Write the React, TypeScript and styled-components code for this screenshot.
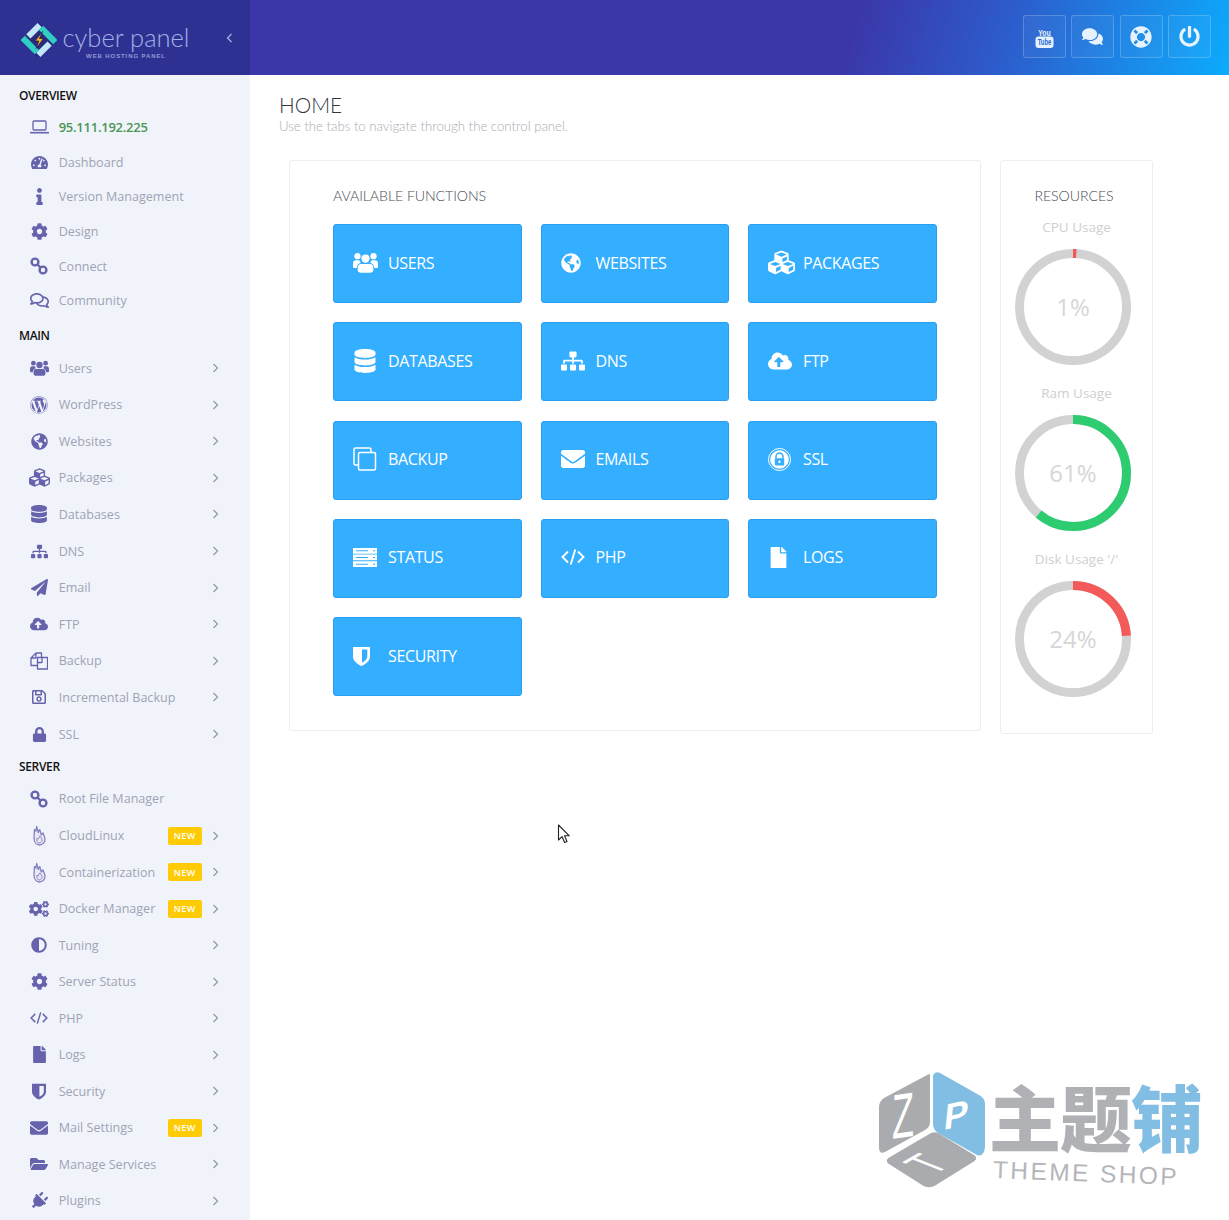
import React from "react";
import styled, { createGlobalStyle } from "styled-components";
import {
  FaAdjust, FaCloudUploadAlt, FaCog, FaCogs, FaComments, FaCubes, FaDatabase,
  FaEnvelope, FaFile, FaFolderOpen, FaGlobeAmericas, FaInfo, FaLifeRing, FaLock, FaPaperPlane, FaPlug,
  FaPowerOff, FaRegComments, FaRegSave, FaSitemap, FaTachometerAlt, FaWordpress,
} from "react-icons/fa";

const Global = createGlobalStyle`
  html, body { margin: 0; padding: 0; background: #fff; }
  body { font-family: "Open Sans", "Liberation Sans", sans-serif; }
  * { box-sizing: border-box; }
`;

const Shell = styled.div`
  position: relative;
  width: 1229px;
  height: 1220px;
  overflow: hidden;
  display: grid;
  grid-template-columns: 250px 1fr;
  grid-template-rows: 75px 1fr;
`;

const TopBar = styled.header`
  grid-column: 1 / 3;
  display: flex;
  align-items: center;
  background: linear-gradient(106deg, #3b37a9 0%, #3b37a9 69%, #2d5bcb 81%, #0cabfd 100%);
`;

const Brand = styled.div`
  width: 250px;
  height: 75px;
  display: flex;
  align-items: center;
  padding-left: 21px;
  background: #2f3192;
  color: #b6c3ee;
`;

const LogoSlot = styled.span`
  display: flex;
  margin-top: 4px;
`;

const BrandText = styled.div`
  margin-left: 6px;
  margin-top: 9px;
  display: flex;
  flex-direction: column;
  align-items: center;
  width: 126px;
`;

const BrandName = styled.span`
  font-family: "Lato", sans-serif;
  font-weight: 300;
  font-size: 25.5px;
  line-height: 27px;
  white-space: nowrap;
  color: #a3b2e6;
`;

const BrandTag = styled.span`
  margin-top: 1px;
  font-family: "Liberation Sans", sans-serif;
  font-weight: 700;
  font-size: 6px;
  line-height: 8px;
  letter-spacing: 0.9px;
  color: #8f9bd8;
`;

const Collapse = styled.span`
  margin-left: 37px;
  display: flex;
  color: #a9b3e6;
`;

const TopActions = styled.div`
  margin-left: auto;
  margin-right: 18px;
  margin-top: -2px;
  display: flex;
  gap: 5.33px;
`;

const TopButton = styled.div`
  width: 43px;
  height: 43px;
  display: flex;
  align-items: center;
  justify-content: center;
  border: 1px solid rgba(255, 255, 255, 0.2);
  border-radius: 3px;
  background: rgba(255, 255, 255, 0.04);
  color: #e6f3ff;
  font-size: 21px;
`;

const Sidebar = styled.aside`
  background: #f1f3fb;
  overflow: hidden;
`;

const GroupLabel = styled.div<{ $h: number; $pt: number }>`
  height: ${(p) => p.$h}px;
  padding: ${(p) => p.$pt}px 0 0 19px;
  display: flex;
  align-items: center;
  font-size: 12px;
  font-weight: 600;
  letter-spacing: -0.35px;
  color: #111;
`;

const Row = styled.div<{ $h: number }>`
  height: ${(p) => p.$h}px;
  display: flex;
  align-items: center;
  padding-left: 27px;
  padding-right: 31px;
`;

const RowIcon = styled.span`
  width: 24px;
  flex: none;
  display: flex;
  justify-content: center;
  color: #6662ac;
  font-size: 17px;
`;

const RowText = styled.span<{ $ip?: boolean }>`
  margin-left: 7.7px;
  font-size: ${(p) => (p.$ip ? 13 : 12.55)}px;
  white-space: nowrap;
  color: ${(p) => (p.$ip ? "#4b9654" : "#9ea3b3")};
  font-weight: ${(p) => (p.$ip ? 600 : 400)};
  letter-spacing: ${(p) => (p.$ip ? "-0.25px" : "0")};
`;

const NewBadge = styled.span`
  margin-left: auto;
  margin-right: 10px;
  width: 34.5px;
  height: 18px;
  display: flex;
  align-items: center;
  justify-content: center;
  background: #ffcb05;
  border-radius: 2px;
  color: #fff;
  font-size: 9px;
  font-weight: 600;
  letter-spacing: 0.4px;
`;

const Chevron = styled.span<{ $auto: boolean }>`
  margin-left: ${(p) => (p.$auto ? "auto" : "0")};
  display: flex;
  color: #9296a8;
`;

const Main = styled.main`
  padding: 18px 0 0 29px;
  background: #fff;
`;

const PageTitle = styled.h1`
  margin: 0;
  font-family: "Lato", sans-serif;
  font-weight: 300;
  font-size: 20.8px;
  line-height: 23px;
  color: #33353f;
`;

const PageSub = styled.p`
  margin: 2px 0 0;
  font-family: "Lato", sans-serif;
  font-weight: 300;
  font-size: 13.2px;
  line-height: 16px;
  white-space: nowrap;
  color: #a9acb4;
`;

const Cards = styled.div`
  margin: 26px 0 0 10px;
  display: flex;
  align-items: flex-start;
  gap: 19px;
`;

const Card = styled.section`
  width: 692px;
  padding: 24px 43px 34px;
  border: 1px solid #eeeeee;
  border-radius: 3px;
`;

const CardTitle = styled.h2<{ $center?: boolean }>`
  margin: 0 0 18px;
  padding-right: ${(p) => (p.$center ? "5px" : "0")};
  font-family: "Lato", sans-serif;
  font-weight: 300;
  font-size: 14.2px;
  line-height: 21px;
  letter-spacing: -0.1px;
  white-space: nowrap;
  color: #4a4c57;
  text-align: ${(p) => (p.$center ? "center" : "left")};
`;

const TileGrid = styled.div`
  display: grid;
  grid-template-columns: repeat(3, 188.5px);
  grid-auto-rows: 79px;
  column-gap: 19px;
  row-gap: 19.3px;
`;

const Tile = styled.a`
  display: flex;
  align-items: center;
  padding-left: 19px;
  padding-bottom: 2px;
  background: #34aeff;
  border: 1px solid #2a9ef2;
  border-radius: 3px;
  color: #fff;
  font-size: 16px;
  letter-spacing: -0.35px;
`;

const TileIcon = styled.span`
  width: 35px;
  flex: none;
  display: flex;
  font-size: 24px;
`;

const Panel = styled.section`
  width: 153px;
  padding: 24px 0 36px;
  border: 1px solid #eeeeee;
  border-radius: 3px;
`;

const Gauge = styled.div`
  margin-top: 18px;
  &:first-of-type { margin-top: -7px; }
`;

const GaugeLabel = styled.div`
  height: 20px;
  line-height: 20px;
  margin-bottom: 12px;
  text-align: center;
  font-size: 13.5px;
  color: #cfcfcf;
`;

const Ring = styled.div`
  margin-left: 14px;
  width: 116px;
  height: 116px;
  display: grid;
  place-items: center;
  & > * { grid-area: 1 / 1; }
`;

const RingValue = styled.span`
  padding-bottom: 2px;
  font-size: 24px;
  color: #d6d6d6;
`;

const Watermark = styled.div`
  position: absolute;
  left: 878px;
  top: 1072px;
  width: 330px;
  height: 120px;
  display: flex;
`;

const MarkText = styled.div`
  margin-left: 3px;
  padding-top: 4px;
`;

const MarkCjk = styled.div`
  font-family: "Noto Sans CJK SC", sans-serif;
  font-weight: 900;
  font-size: 72px;
  line-height: 78px;
  white-space: nowrap;
  color: #afb1b5;
  letter-spacing: -1px;
`;

const MarkAccent = styled.span`
  color: #82bde3;
`;

const MarkLatin = styled.div`
  margin: 6px 0 0 4px;
  font-family: "Liberation Sans", sans-serif;
  font-size: 24.5px;
  line-height: 28px;
  letter-spacing: 2.4px;
  white-space: nowrap;
  color: #b4b6ba;
  transform: rotate(2.2deg);
`;

const Pointer = styled.svg`
  position: absolute;
  left: 557px;
  top: 824px;
`;

const RingSvg = styled.svg`
  display: block;
`;

const TiltedPlug = styled(FaPlug)`
  transform: rotate(45deg);
`;

/* hand-drawn icons */
const Chain = () => (
  <svg width="18" height="18" viewBox="0 0 18 18" fill="none" stroke="currentColor" strokeWidth="2.4">
    <circle cx="5" cy="5" r="3.4" />
    <circle cx="13" cy="13" r="3.4" />
    <path d="M7.5 7.5l3 3" />
  </svg>
);

const Flame = () => (
  <svg width="17" height="21" viewBox="0 0 17 21" fill="#e8e7f4" stroke="#8581bf" strokeWidth="1.3" strokeLinejoin="round">
    <path d="M3.500 4.500 3 13c0 4.500 2.500 7 5.500 7s5.500-2.500 5.500-5.500c0-3-1.500-4-2-6.500L10.300 9.800 8.700 4.500 7.300 7.500 5.700 1.500 5 6z" />
    <path d="M6 13c.5 1 1 1.200 1.500.800.2-1.300.8-2.300 1.500-3 .3 1.500 2.500 2.500 2 5-.4 1.500-1.700 2.200-3 2.200-2 0-2.500-2.500-2-5z" fill="none" strokeWidth="0.900" />
  </svg>
);

const Laptop = () => (
  <svg width="19" height="14" viewBox="0 0 19 14" fill="none" stroke="currentColor" strokeWidth="1.3">
    <rect x="3" y="1" width="13" height="9" rx="1" />
    <path d="M0 12.700h19" strokeWidth="1.600" />
  </svg>
);

const Users = ({ w }: { w: number }) => (
  <svg width={w} height={(w * 20) / 24} viewBox="0 0 24 20" fill="currentColor">
    <circle cx="12" cy="6.300" r="4" />
    <circle cx="4.300" cy="4" r="3" />
    <circle cx="19.700" cy="4" r="3" />
    <path d="M7.500 11.500h9c1.800 0 3 1.500 3 3.500v2.300c0 1.600-1.400 2.700-3 2.700h-9c-1.600 0-3-1.100-3-2.700V15c0-2 1.200-3.500 3-3.500z" />
    <path d="M0 14.300v-3.200c0-2 1.200-3.100 3-3.100h3c.4 1 .8 1.700 1.500 2.400-2.200.6-3.800 2.400-4 5H1.300C.500 15.400 0 15 0 14.300z" />
    <path d="M24 14.300v-3.200c0-2-1.200-3.100-3-3.100h-3c-.4 1-.8 1.700-1.500 2.400 2.200.6 3.800 2.400 4 5h2.200c.8 0 1.300-.4 1.300-1.100z" />
  </svg>
);

const CodeMark = ({ w }: { w: number }) => (
  <svg width={w} height={(w * 16) / 24} viewBox="0 0 24 16" fill="none" stroke="currentColor" strokeWidth="1.900">
    <path d="M7 2.500 1.500 8 7 13.500M17 2.500 22.500 8 17 13.500M14.300.5 9.700 15.500" />
  </svg>
);

const Shield = ({ w }: { w: number }) => (
  <svg width={w} height={(w * 20) / 17} viewBox="0 0 17 20" fill="currentColor">
    <path fillRule="evenodd" d="M0 1h17v9.500c0 4.300-4 7.500-8.500 9.500C4 18 0 14.800 0 10.500zM9 3.500v13.300c2.800-1.500 5.300-3.500 5.300-6.500V3.500z" />
  </svg>
);

const Papers = () => (
  <svg width="18" height="18" viewBox="0 0 18 18" fill="none" stroke="currentColor" strokeWidth="1.300" strokeLinejoin="round">
    <path d="M6 1 1 6v7.500h6M6 1h5.500v4.500M6 1v5H1" />
    <path d="M7.500 5.500h10V17h-10zM12 5.500v5H7.500" />
  </svg>
);

const Clone = () => (
  <svg width="24" height="24" viewBox="0 0 24 24" fill="none" stroke="currentColor" strokeWidth="1.500">
    <path d="M18 5V2.500A1.500 1.500 0 0 0 16.500 1h-14A1.500 1.500 0 0 0 1 2.500v14A1.500 1.500 0 0 0 2.500 18H5" />
    <rect x="5.500" y="5.500" width="17" height="17.500" rx="1.500" />
  </svg>
);

const Rack = () => (
  <svg width="24" height="19" viewBox="0 0 24 19" fill="currentColor">
    <path fillRule="evenodd" d="M0 0h24v5.700H0zM3 2.300v1h12v-1zM20 2.300v1h2v-1zM0 6.600h24v5.700H0zM3 9v1h12V9zM20 9v1h2V9zM0 13.300h24V19H0zM3 15.700v1h12v-1zM20 15.700v1h2v-1z" />
  </svg>
);

const Angle = ({ left }: { left?: boolean }) => (
  <svg width="7" height="10" viewBox="0 0 7 10" fill="none" stroke="currentColor" strokeWidth="1.200">
    <path d={left ? "M5.500 1 1.500 5l4 4" : "M1.500 1l4 4-4 4"} />
  </svg>
);

const YouTube = () => (
  <svg width="19" height="24" viewBox="0 -2 19 24">
    <text transform="translate(9.500 8.500) scale(0.72 1)" textAnchor="middle" fontFamily="'Liberation Sans', sans-serif" fontWeight="700" fontSize="9.500" fill="currentColor">You</text>
    <rect x="0.500" y="9.500" width="18" height="11.500" rx="3" fill="currentColor" />
    <text transform="translate(9.500 18.300) scale(0.66 1)" textAnchor="middle" fontFamily="'Liberation Sans', sans-serif" fontWeight="700" fontSize="9" fill="#2a6ad2">Tube</text>
  </svg>
);

const SslBadge = () => (
  <svg width="23" height="23" viewBox="0 0 23 23">
    <circle cx="11.500" cy="11.500" r="11" fill="none" stroke="#fff" strokeWidth="1" />
    <circle cx="11.500" cy="11.500" r="9.300" fill="#fff" />
    <path d="M8 10.500V8.500a3.500 3.500 0 0 1 7 0v2" fill="none" stroke="#34aeff" strokeWidth="1.500" />
    <rect x="6.800" y="10.300" width="9.400" height="7.200" rx="1" fill="#34aeff" />
    <circle cx="11.500" cy="13.700" r="1.200" fill="#fff" />
  </svg>
);

const Logo = () => (
  <svg width="36" height="36" viewBox="0 0 36 36">
    <g transform="rotate(45 18 18)">
      <rect x="5" y="5" width="26" height="26" rx="2" fill="#2a2b7e" />
      <path d="M5 7h6v16H5z" fill="#c3e6f8" />
      <path d="M11 5h20v6H11z" fill="#2fd0c3" />
      <path d="M25 13h6v16h-6z" fill="#c3e6f8" />
      <path d="M5 25h20v6H5z" fill="#2fd0c3" />
    </g>
    <path d="M21.500 9.500 14 19h3.800l-2.800 7.500 7.500-10h-4z" fill="#f5b91e" stroke="#1f1f66" strokeWidth="0.800" />
  </svg>
);

const Cursor = () => (
  <Pointer width="14" height="20" viewBox="0 0 14 20">
    <path d="M1.500 1v15l3.600-3.300 2.500 5.800 2.400-1-2.500-5.700h4.800z" fill="#fff" stroke="#222" strokeWidth="1.100" strokeLinejoin="round" />
  </Pointer>
);

const Cube = () => (
  <svg width="108" height="118" viewBox="0 0 108 118">
    <path d="M51 2 6 26c-3 2-5 5-5 9v40c0 5 2 7 6 5l40-22c3-2 5-4 5-8V4c0-2-1-2-1-2z" fill="#a9abaf" />
    <path d="M57 1c1-1 3-1 5 0l39 22c4 2 6 5 6 9v42c0 6-3 11-8 9L60 61c-3-2-5-5-5-9V4c0-1 1-2 2-3z" fill="#82bde3" />
    <path d="M53 61 12 85c-4 2-4 5-1 7l33 21c5 3 9 3 14 0l37-23c4-2 4-5 1-7L60 61c-2-1-5-1-7 0z" fill="#a9abaf" />
    <text fontFamily="'Liberation Sans', sans-serif" fontSize="36" fill="#fff" transform="translate(14 67) skewY(-8) scale(1.0 1.75)">Z</text>
    <text fontFamily="'Liberation Sans', sans-serif" fontWeight="700" fontSize="36" fill="#fff" transform="translate(65 58) skewY(-12) skewX(-6)">P</text>
    <text fontFamily="'Liberation Sans', sans-serif" fontSize="34" fill="#fff" transform="matrix(.87 -.5 1.37 .54 55.5 103.2)">T</text>
  </svg>
);

type Item = { icon: React.ReactNode; label: string; badge?: boolean; arrow?: boolean; ip?: boolean };

const overview: Item[] = [
  { icon: <Laptop />, label: "95.111.192.225", ip: true },
  { icon: <FaTachometerAlt />, label: "Dashboard" },
  { icon: <FaInfo />, label: "Version Management" },
  { icon: <FaCog />, label: "Design" },
  { icon: <Chain />, label: "Connect" },
  { icon: <FaRegComments size={19} />, label: "Community" },
];

const mainItems: Item[] = [
  { icon: <Users w={19} />, label: "Users", arrow: true },
  { icon: <FaWordpress size={18} />, label: "WordPress", arrow: true },
  { icon: <FaGlobeAmericas />, label: "Websites", arrow: true },
  { icon: <FaCubes size={21} />, label: "Packages", arrow: true },
  { icon: <FaDatabase size={18} />, label: "Databases", arrow: true },
  { icon: <FaSitemap size={17} />, label: "DNS", arrow: true },
  { icon: <FaPaperPlane />, label: "Email", arrow: true },
  { icon: <FaCloudUploadAlt size={18} />, label: "FTP", arrow: true },
  { icon: <Papers />, label: "Backup", arrow: true },
  { icon: <FaRegSave size={16} />, label: "Incremental Backup", arrow: true },
  { icon: <FaLock size={15} />, label: "SSL", arrow: true },
];

const server: Item[] = [
  { icon: <Chain />, label: "Root File Manager" },
  { icon: <Flame />, label: "CloudLinux", badge: true, arrow: true },
  { icon: <Flame />, label: "Containerization", badge: true, arrow: true },
  { icon: <FaCogs size={20} />, label: "Docker Manager", badge: true, arrow: true },
  { icon: <FaAdjust size={16} />, label: "Tuning", arrow: true },
  { icon: <FaCog />, label: "Server Status", arrow: true },
  { icon: <CodeMark w={18} />, label: "PHP", arrow: true },
  { icon: <FaFile />, label: "Logs", arrow: true },
  { icon: <Shield w={14} />, label: "Security", arrow: true },
  { icon: <FaEnvelope size={18} />, label: "Mail Settings", badge: true, arrow: true },
  { icon: <FaFolderOpen size={18} />, label: "Manage Services", arrow: true },
  { icon: <TiltedPlug size={18} />, label: "Plugins", arrow: true },
];

const tiles: { icon: React.ReactNode; label: string }[] = [
  { icon: <Users w={25} />, label: "USERS" },
  { icon: <FaGlobeAmericas size={20} />, label: "WEBSITES" },
  { icon: <FaCubes size={27} />, label: "PACKAGES" },
  { icon: <FaDatabase />, label: "DATABASES" },
  { icon: <FaSitemap />, label: "DNS" },
  { icon: <FaCloudUploadAlt />, label: "FTP" },
  { icon: <Clone />, label: "BACKUP" },
  { icon: <FaEnvelope />, label: "EMAILS" },
  { icon: <SslBadge />, label: "SSL" },
  { icon: <Rack />, label: "STATUS" },
  { icon: <CodeMark w={24} />, label: "PHP" },
  { icon: <FaFile size={21} />, label: "LOGS" },
  { icon: <Shield w={17} />, label: "SECURITY" },
];

const gauges = [
  { label: "CPU Usage", value: 1, color: "#f55a5a" },
  { label: "Ram Usage", value: 61, color: "#2ecc71" },
  { label: "Disk Usage '/'", value: 24, color: "#f55a5a" },
];

const Rows = ({ items, h }: { items: Item[]; h: number }) => (
  <>
    {items.map((it) => (
      <Row key={it.label} $h={h}>
        <RowIcon>{it.icon}</RowIcon>
        <RowText $ip={it.ip}>{it.label}</RowText>
        {it.badge && <NewBadge>NEW</NewBadge>}
        {it.arrow && (
          <Chevron $auto={!it.badge}>
            <Angle />
          </Chevron>
        )}
      </Row>
    ))}
  </>
);

const GaugeRing = ({ value, color }: { value: number; color: string }) => {
  const r = 53.5;
  const c = 2 * Math.PI * r;
  return (
    <Ring>
      <RingSvg width="116" height="116" viewBox="0 0 116 116">
        <circle cx="58" cy="58" r={r} fill="none" stroke="#d2d2d2" strokeWidth="9" />
        <circle
          cx="58"
          cy="58"
          r={r}
          fill="none"
          stroke={color}
          strokeWidth="9"
          strokeDasharray={`${(c * value) / 100} ${c}`}
          transform="rotate(-90 58 58)"
        />
      </RingSvg>
      <RingValue>{value}%</RingValue>
    </Ring>
  );
};

export default function App() {
  return (
    <Shell>
      <Global />
      <TopBar>
        <Brand>
          <LogoSlot><Logo /></LogoSlot>
          <BrandText>
            <BrandName>cyber panel</BrandName>
            <BrandTag>WEB HOSTING PANEL</BrandTag>
          </BrandText>
          <Collapse>
            <Angle left />
          </Collapse>
        </Brand>
        <TopActions>
          <TopButton><YouTube /></TopButton>
          <TopButton><FaComments /></TopButton>
          <TopButton><FaLifeRing size={22} /></TopButton>
          <TopButton><FaPowerOff /></TopButton>
        </TopActions>
      </TopBar>
      <Sidebar>
        <GroupLabel $h={35.05} $pt={5}>OVERVIEW</GroupLabel>
        <Rows items={overview} h={34.7} />
        <GroupLabel $h={31.6} $pt={4}>MAIN</GroupLabel>
        <Rows items={mainItems} h={36.6} />
        <GroupLabel $h={28.4} $pt={0}>SERVER</GroupLabel>
        <Rows items={server} h={36.55} />
      </Sidebar>
      <Main>
        <PageTitle>HOME</PageTitle>
        <PageSub>Use the tabs to navigate through the control panel.</PageSub>
        <Cards>
          <Card>
            <CardTitle>AVAILABLE FUNCTIONS</CardTitle>
            <TileGrid>
              {tiles.map((t) => (
                <Tile key={t.label}>
                  <TileIcon>{t.icon}</TileIcon>
                  {t.label}
                </Tile>
              ))}
            </TileGrid>
          </Card>
          <Panel>
            <CardTitle $center>RESOURCES</CardTitle>
            {gauges.map((g) => (
              <Gauge key={g.label}>
                <GaugeLabel>{g.label}</GaugeLabel>
                <GaugeRing value={g.value} color={g.color} />
              </Gauge>
            ))}
          </Panel>
        </Cards>
      </Main>
      <Cursor />
      <Watermark>
        <Cube />
        <MarkText>
          <MarkCjk>主题<MarkAccent>铺</MarkAccent></MarkCjk>
          <MarkLatin>THEME SHOP</MarkLatin>
        </MarkText>
      </Watermark>
    </Shell>
  );
}
